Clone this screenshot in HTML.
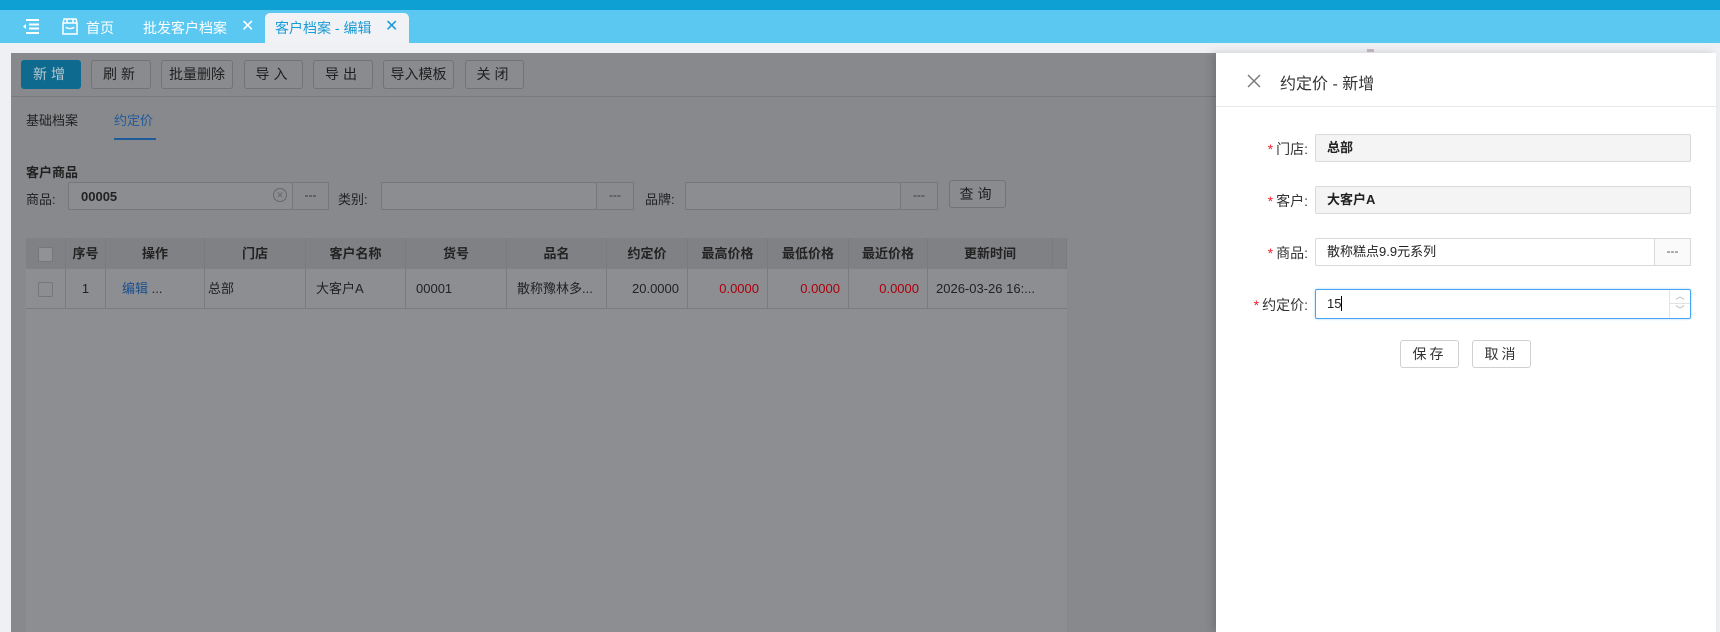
<!DOCTYPE html>
<html><head><meta charset="utf-8"><style>
*{box-sizing:border-box;margin:0;padding:0}
body{width:1720px;height:632px;overflow:hidden;background:#eef0f4;font-family:"Liberation Sans","Noto Sans CJK SC",sans-serif;font-size:13px;color:#222;position:relative}
.abs{position:absolute}
.top{left:0;top:0;width:1720px;height:10px;background:#0e9fd3}
.tabs{left:0;top:10px;width:1720px;height:33px;background:#5bc8f2;color:#fff;font-size:14px}
.tabs span{position:absolute;top:8px}
.atab{left:265px;top:3px;width:144px;height:30px;background:#f0f2f5;border-radius:5px 5px 0 0}
.main{left:11px;top:53px;width:1205px;height:579px;background:#88898d}
.btn{position:absolute;top:60px;height:29px;border:1px solid #727377;border-radius:3px;background:#8a8b8f;text-align:center;line-height:27px;font-size:14px;color:#1e1e1e}
.inp{position:absolute;height:28px;border:1px solid #76777b;background:#8c8d91;border-radius:2px}
.dots{position:absolute;height:28px;border:1px solid #76777b;background:#8a8b8f;text-align:center;line-height:24px;color:#333;font-size:12px}
.th,.td{position:absolute;text-align:center;border-right:1px solid #7a7b7f}
.th{top:238px;height:31px;line-height:31px;background:#808185;font-weight:bold;font-size:13px}
.td{top:269px;height:40px;line-height:40px;background:#8d8e92;border-bottom:1px solid #7a7b7f}
.red{color:#a8000c}
.drawer{left:1216px;top:53px;width:500px;height:579px;background:#fff;box-shadow:-4px 0 8px rgba(0,0,0,.15)}
.lbl{position:absolute;width:100px;text-align:right;left:1208px;font-size:14px;color:#333}
.lbl b{color:#f5222d;font-weight:normal;margin-right:3px}
.fi{position:absolute;left:1315px;width:376px;height:28px;border:1px solid #d9d9d9;border-radius:2px;font-size:13px;line-height:26px;padding-left:11px}
.dbtn{position:absolute;top:340px;height:28px;width:59px;border:1px solid #d0d0d0;border-radius:3px;background:#fff;text-align:center;line-height:26px;font-size:14px;letter-spacing:3px;color:#333}
</style></head><body>
<div class="abs top"></div>
<div class="abs tabs">
 <svg class="abs" style="left:22px;top:9px" width="18" height="15" viewBox="0 0 18 15"><g stroke="#fff" stroke-width="2"><path d="M4 1h13M7 5.5h10M7 9.5h10M4 14h13"/></g><path d="M1 7.5l3-2.5v5z" fill="#fff"/></svg>
 <svg class="abs" style="left:62px;top:8px" width="16" height="17" viewBox="0 0 16 17"><path d="M2 1h12l1 4v11H1V5z M1 5h14 M5 1v4 M11 1v4 M4 9c1 2 7 2 8 0" fill="none" stroke="#fff" stroke-width="1.5"/></svg>
 <span style="left:86px">首页</span>
 <span style="left:143px">批发客户档案</span>
 <span style="left:241px;font-size:16px;top:6px">✕</span>
 <div class="abs atab"></div>
 <span style="left:275px;color:#1a9bd6">客户档案 - 编辑</span>
 <span style="left:385px;color:#1a9bd6;font-size:16px;top:6px">✕</span>
</div>
<div class="abs main"></div>
<div class="abs" style="left:11px;top:96px;width:1205px;height:1px;background:#7a7b7f"></div>
<div class="btn" style="left:21px;width:60px;background:#0e6a8e;border-color:#0e6a8e;color:#b8c8d0;letter-spacing:4px">新增</div>
<div class="btn" style="left:91px;width:60px;letter-spacing:4px">刷新</div>
<div class="btn" style="left:161px;width:72px">批量删除</div>
<div class="btn" style="left:244px;width:59px;letter-spacing:4px">导入</div>
<div class="btn" style="left:313px;width:60px;letter-spacing:4px">导出</div>
<div class="btn" style="left:383px;width:71px">导入模板</div>
<div class="btn" style="left:465px;width:59px;letter-spacing:4px">关闭</div>
<div class="abs" style="left:26px;top:110px;font-size:13px">基础档案</div>
<div class="abs" style="left:114px;top:110px;font-size:13px;color:#1f5a9a">约定价</div>
<div class="abs" style="left:114px;top:138px;width:42px;height:2px;background:#1f5a9a"></div>
<div class="abs" style="left:26px;top:162px;font-weight:bold;font-size:13px">客户商品</div>
<div class="abs" style="left:26px;top:189px">商品:</div>
<div class="inp" style="left:68px;top:182px;width:225px;font-weight:bold;padding:6px 12px">00005</div>
<div class="abs" style="left:273px;top:188px;width:14px;height:14px;border:1px solid #666;border-radius:50%;font-size:9px;text-align:center;line-height:12px;color:#666">✕</div>
<div class="dots" style="left:292px;top:182px;width:37px">---</div>
<div class="abs" style="left:338px;top:189px">类别:</div>
<div class="inp" style="left:381px;top:182px;width:216px"></div>
<div class="dots" style="left:596px;top:182px;width:38px">---</div>
<div class="abs" style="left:645px;top:189px">品牌:</div>
<div class="inp" style="left:685px;top:182px;width:216px"></div>
<div class="dots" style="left:900px;top:182px;width:38px">---</div>
<div class="btn" style="left:949px;top:180px;width:57px;height:28px;letter-spacing:4px">查询</div>
<div class="abs" style="left:26px;top:238px;width:1041px;height:394px;background:#8d8e92"></div>
<div class="th" style="left:26px;width:40px"><span style="display:inline-block;width:15px;height:15px;border:1px solid #777;background:#919296;vertical-align:middle;border-radius:2px"></span></div>
<div class="th" style="left:66px;width:40px">序号</div>
<div class="th" style="left:106px;width:99px">操作</div>
<div class="th" style="left:205px;width:101px">门店</div>
<div class="th" style="left:306px;width:100px">客户名称</div>
<div class="th" style="left:406px;width:101px">货号</div>
<div class="th" style="left:507px;width:100px">品名</div>
<div class="th" style="left:607px;width:81px">约定价</div>
<div class="th" style="left:688px;width:80px">最高价格</div>
<div class="th" style="left:768px;width:81px">最低价格</div>
<div class="th" style="left:849px;width:79px">最近价格</div>
<div class="th" style="left:928px;width:125px">更新时间</div>
<div class="th" style="left:1053px;width:14px"></div>
<div class="td" style="left:26px;width:40px"><span style="display:inline-block;width:15px;height:15px;border:1px solid #777;vertical-align:middle;border-radius:2px"></span></div>
<div class="td" style="left:66px;width:40px">1</div>
<div class="td" style="left:106px;width:99px;text-align:left;padding-left:16px"><span style="color:#1a4f8c">编辑</span> ...</div>
<div class="td" style="left:205px;width:101px;text-align:left;padding-left:3px">总部</div>
<div class="td" style="left:306px;width:100px;text-align:left;padding-left:10px">大客户A</div>
<div class="td" style="left:406px;width:101px;text-align:left;padding-left:10px">00001</div>
<div class="td" style="left:507px;width:100px;text-align:left;padding-left:10px">散称豫林多...</div>
<div class="td" style="left:607px;width:81px;text-align:right;padding-right:8px">20.0000</div>
<div class="td red" style="left:688px;width:80px;text-align:right;padding-right:8px">0.0000</div>
<div class="td red" style="left:768px;width:81px;text-align:right;padding-right:8px">0.0000</div>
<div class="td red" style="left:849px;width:79px;text-align:right;padding-right:8px">0.0000</div>
<div class="td" style="left:928px;width:139px;text-align:left;padding-left:8px;border-right:none">2026-03-26 16:...</div>
<div class="abs" style="left:1367px;top:49px;width:7px;height:3px;background:#c9b8c8"></div>
<div class="abs drawer"></div>
<div class="abs" style="left:1216px;top:106px;width:500px;height:1px;background:#e8e8e8"></div>
<svg class="abs" style="left:1247px;top:74px" width="14" height="14" viewBox="0 0 14 14"><path d="M1 1l12 12M13 1L1 13" stroke="#777" stroke-width="1.4"/></svg>
<div class="abs" style="left:1280px;top:70px;font-size:16px;color:#333">约定价 - 新增</div>
<div class="lbl" style="top:139px"><b>*</b>门店:</div>
<div class="fi" style="top:134px;background:#f4f4f4;font-weight:bold">总部</div>
<div class="lbl" style="top:191px"><b>*</b>客户:</div>
<div class="fi" style="top:186px;background:#f4f4f4;font-weight:bold">大客户A</div>
<div class="lbl" style="top:243px"><b>*</b>商品:</div>
<div class="fi" style="top:238px">散称糕点9.9元系列</div>
<div class="abs" style="left:1654px;top:238px;width:37px;height:28px;border:1px solid #d9d9d9;background:#fafafa;text-align:center;line-height:24px;color:#555;font-size:12px">---</div>
<div class="lbl" style="top:295px"><b>*</b>约定价:</div>
<div class="fi" style="top:289px;height:30px;border-color:#4aa3f0;box-shadow:0 0 2px #9cd0ff;line-height:28px">15<span style="border-left:1px solid #000;margin-left:0">&nbsp;</span></div>
<div class="abs" style="left:1669px;top:290px;width:21px;height:28px;border-left:1px solid #e3e3e3;color:#aaa;font-size:9px;text-align:center;line-height:13px">︿<br><span style="border-top:1px solid #e3e3e3;display:block">﹀</span></div>
<div class="dbtn" style="left:1400px">保存</div>
<div class="dbtn" style="left:1472px">取消</div>
</body></html>
